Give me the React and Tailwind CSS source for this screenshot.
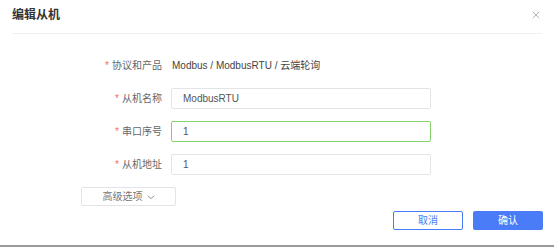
export default function App() {
  const font = { fontFamily: '"Liberation Sans", "Noto Sans CJK SC", sans-serif' };
  const rows = [
    { label: "协议和产品", text: "Modbus / ModbusRTU / 云端轮询" },
    { label: "从机名称", value: "ModbusRTU" },
    { label: "串口序号", value: "1", active: true },
    { label: "从机地址", value: "1" },
  ];

  return (
    <div className="w-[554px] h-[247px] bg-white flex flex-col text-[10px]" style={font}>
      {/* Header */}
      <div className="mx-3 h-[34px] flex items-center justify-between border-b border-[#f0f0f0] pb-[4px]">
        <h2 className="text-[12px] font-bold text-[#333]">编辑从机</h2>
        <button type="button" className="text-[#b0b0b0] mr-[2px]">
          <svg className="w-[8px] h-[8px]" viewBox="0 0 10 10" fill="none" stroke="currentColor" strokeWidth="1.2">
            <path d="M1 1l8 8M9 1l-8 8" />
          </svg>
        </button>
      </div>

      {/* Form */}
      <div className="pt-[21px] flex flex-col gap-[12px]">
        {rows.map((r) => (
          <div key={r.label} className="flex items-center h-[21px]">
            <label className="w-[162px] text-right text-[#666]">
              <span className="text-[#f56c6c] mr-[3px]">*</span>
              {r.label}
            </label>
            {r.text ? (
              <span className="ml-[10px] text-[#444]">{r.text}</span>
            ) : (
              <div
                className={`ml-[9px] w-[260px] h-[21px] rounded-[2px] border flex items-center px-[11px] text-[#555] ${
                  r.active ? "border-[#85d16b]" : "border-[#e2e4e8]"
                }`}
              >
                {r.value}
              </div>
            )}
          </div>
        ))}
      </div>

      <div className="pl-[81px] mt-[12px]">
        <button
          type="button"
          className="w-[95px] h-[19px] rounded-[2px] border border-[#e2e4e8] text-[#777] flex items-center justify-center gap-[4px]"
        >
          高级选项
          <svg className="w-[8px] h-[8px]" viewBox="0 0 10 10" fill="none" stroke="currentColor" strokeWidth="1">
            <path d="M1 3.5l4 3.5 4-3.5" />
          </svg>
        </button>
      </div>

      <div className="flex justify-end gap-[10px] pr-[11px] mt-[5px]">
        <button type="button" className="w-[70px] h-[19px] rounded-[2px] border border-[#4a7cf7] text-[#4a7cf7]">
          取消
        </button>
        <button type="button" className="w-[70px] h-[19px] rounded-[2px] bg-[#4a7cf7] text-white">
          确认
        </button>
      </div>

      <div className="mt-auto h-[2px] bg-[#9a9a9a]" />
    </div>
  );
}
